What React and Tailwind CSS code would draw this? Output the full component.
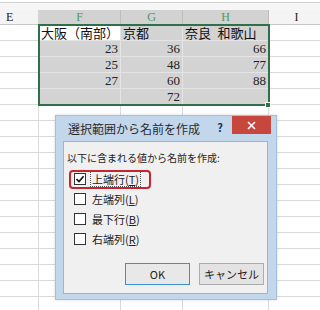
const cols = [
  { key: "E", w: "w-[39px]", sel: false },
  { key: "F", w: "w-[82px]", sel: true },
  { key: "G", w: "w-[62px]", sel: true },
  { key: "H", w: "w-[86px]", sel: true },
  { key: "I", w: "w-[62px]", sel: false },
];

const data = [
  ["", "大阪（南部）", "京都", "奈良\u2002和歌山", ""],
  ["", "23", "36", "66", ""],
  ["", "25", "48", "77", ""],
  ["", "27", "60", "88", ""],
  ["", "", "72", "", ""],
];

const rows = [...data, ...Array.from({ length: 13 }, () => ["", "", "", "", ""])];

const options = [
  { label: "上端行", key: "T", checked: true },
  { label: "左端列", key: "L", checked: false },
  { label: "最下行", key: "B", checked: false },
  { label: "右端列", key: "R", checked: false },
];

const Cell = ({ col, value, row, index }) => {
  const inSel = col.sel && row < 5;
  const active = inSel && row === 0 && index === 1;
  const isText = row === 0;
  return (
    <div
      className={`${col.w} h-[16px] shrink-0 border-r border-b flex items-center px-[2px] ${
        inSel ? "border-[#e4e4e4]" : "border-[#dadada]"
      } ${active ? "bg-white" : inSel ? "bg-[#d3d3d3]" : "bg-white"} ${
        isText ? "justify-start" : "justify-end"
      }`}
    >
      {value && (
        <span
          className={
            isText
              ? "text-[13px] leading-none text-[#111] font-['Noto_Sans_CJK_JP',sans-serif] whitespace-nowrap"
              : "text-[13px] leading-none text-[#222] font-['Liberation_Serif',serif]"
          }
        >
          {value}
        </span>
      )}
    </div>
  );
};

const CheckRow = ({ opt, first }) => (
  <div className="relative h-[20px] shrink-0 flex items-center">
    {first && (
      <div className="absolute left-[-5px] top-px w-[82px] h-[19px] border-2 border-[#c62530] rounded-[4px]" />
    )}
    <div className="w-[12px] h-[12px] shrink-0 border border-[#333] bg-white flex items-center justify-center">
      {opt.checked && (
        <svg width="10" height="10" viewBox="0 0 10 10">
          <path d="M1.5 5.2 L4 7.6 L8.6 2.2" fill="none" stroke="#111" strokeWidth="1.6" />
        </svg>
      )}
    </div>
    <span
      className={`ml-[4px] px-px text-[11px] leading-[14px] text-[#222] ${
        first ? "border border-dotted border-[#555]" : "border border-transparent"
      }`}
    >
      {opt.label}(<span className="underline">{opt.key}</span>)
    </span>
  </div>
);

const App = () => {
  return (
    <div className="relative w-[320px] h-[310px] overflow-hidden bg-white">
      <div className="h-[2px] bg-white" />
      <div className="h-px bg-[#d0d0d0]" />
      <div className="h-[7px] bg-[#f6f6f6]" />

      <div className="flex h-[15px] border-b border-[#c8c8c8]">
        {cols.map((c) => (
          <div
            key={c.key}
            className={`${c.w} shrink-0 flex items-center justify-center border-r ${
              c.sel
                ? "bg-[#d2d2d2] border-[#bdbdbd] text-[#4f9868]"
                : "bg-[#f4f4f4] border-[#d5d5d5] text-[#222]"
            } text-[12px] leading-none font-['Liberation_Serif',serif] ${
              c.key === "E" ? "justify-start pl-[6px]" : ""
            } ${c.key === "I" ? "pr-[6px]" : ""}`}
          >
            {c.key}
          </div>
        ))}
      </div>

      {rows.map((r, ri) => (
        <div key={ri} className="flex">
          {cols.map((c, ci) => (
            <Cell key={c.key} col={c} value={r[ci]} row={ri} index={ci} />
          ))}
        </div>
      ))}

      {/* selection frame + fill handle */}
      <div className="absolute left-[38px] top-[24px] w-[232px] h-[82px] border-2 border-[#2f6f4a]" />
      <div className="absolute left-[265px] top-[102px] w-[6px] h-[6px] bg-[#2f6f4a] border border-white" />

      <div className="absolute left-[55px] top-[115px] w-[222px] h-[185px] bg-[#c2d6ec] border border-[#a6bfdc] flex flex-col font-['Noto_Sans_CJK_JP',sans-serif] shadow-[0_0_3px_rgba(0,0,0,0.15)]">
        <div className="h-[25px] flex items-start shrink-0">
          <div className="pl-[12px] pt-[6px] text-[12px] leading-[14px] text-[#2a2a2a]">
            選択範囲から名前を作成
          </div>
          <div className="ml-auto pt-[4px] text-[11px] font-bold leading-[14px] text-[#1d2f4f]">?</div>
          <div className="ml-[9px] mr-[5px] w-[39px] h-[18px] bg-[#c7473f] flex items-center justify-center">
            <svg width="9" height="9" viewBox="0 0 9 9">
              <path d="M1 1 L8 8 M8 1 L1 8" stroke="#fff" strokeWidth="1.6" />
            </svg>
          </div>
        </div>
        <div className="ml-[7px] mr-[8px] h-[153px] shrink-0 bg-[#f0f0f0] border border-[#9fb3cb] pl-[3px] pr-[3px] pt-[9px] flex flex-col">
          <div className="h-[14px] shrink-0 text-[10px] leading-[14px] text-[#222] whitespace-nowrap">
            以下に含まれる値から名前を作成:
          </div>
          <div className="ml-[7px] mt-[4px] flex flex-col shrink-0">
            {options.map((o, i) => (
              <CheckRow key={o.key} opt={o} first={i === 0} />
            ))}
          </div>
          <div className="mt-[14px] flex justify-end gap-[9px] shrink-0">
            <div className="w-[65px] h-[22px] bg-[#e8e8e8] border border-[#3d8ed1] flex items-center justify-center text-[11px] leading-none text-[#222]">
              OK
            </div>
            <div className="w-[65px] h-[22px] bg-[#e3e3e3] border border-[#adadad] flex items-center justify-center text-[11px] leading-none text-[#222]">
              キャンセル
            </div>
          </div>
        </div>
      </div>
    </div>
  );
};

export default App;
